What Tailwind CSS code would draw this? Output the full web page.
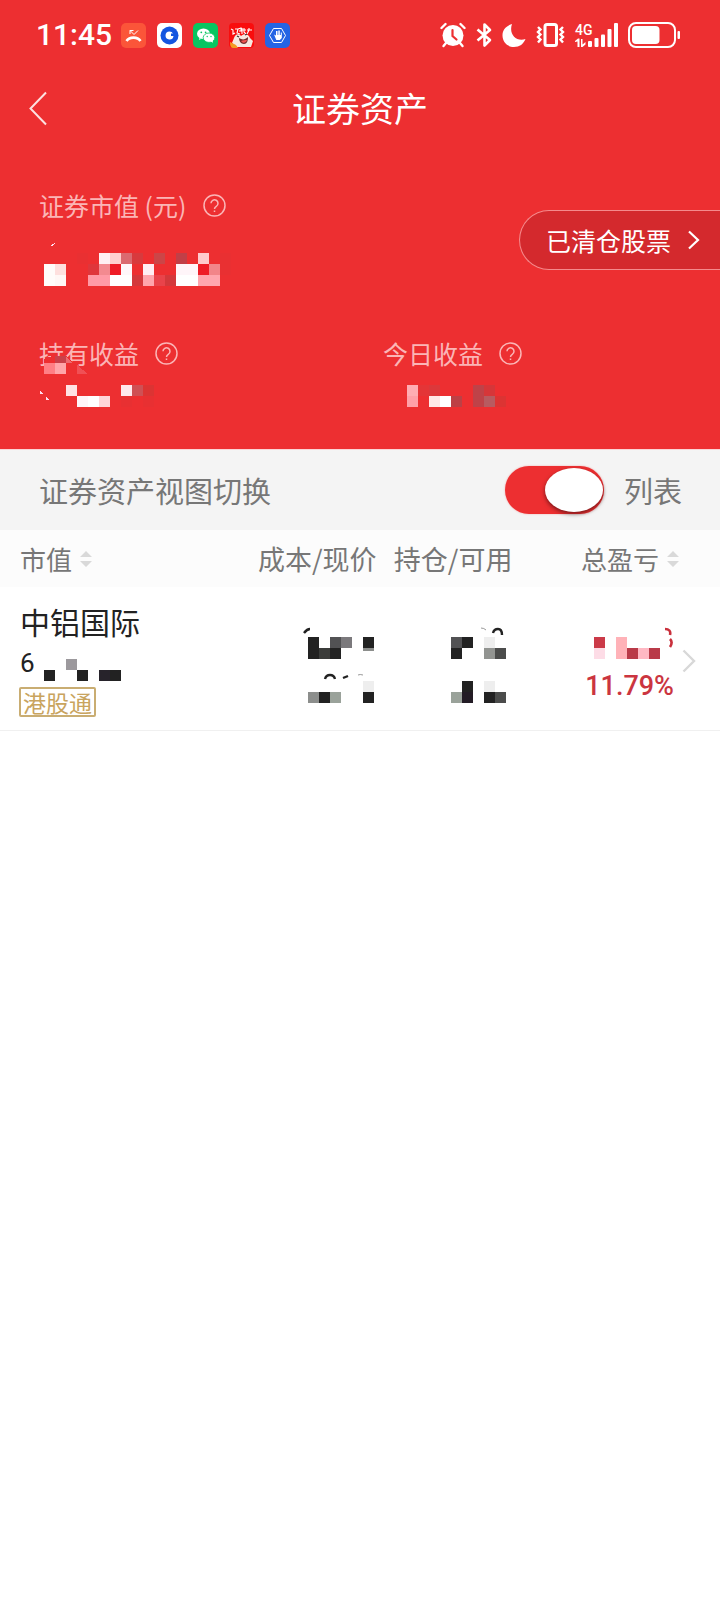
<!DOCTYPE html>
<html lang="zh-CN">
<head>
<meta charset="utf-8">
<meta name="viewport" content="width=device-width, initial-scale=1">
<title>证券资产</title>
<script src="https://cdn.jsdelivr.net/npm/@tailwindcss/browser@4"></script>
</head>
<body class="min-h-screen bg-white font-['Noto_Sans_CJK_SC',sans-serif] text-[#777]">
<div class="bg-[#ed2f31] text-white">
  <!-- Status bar -->
  <div class="flex h-[70px] items-center justify-between pr-10 pl-9">
    <div class="flex items-center gap-[11px]">
      <span class="-mr-[2px] font-['Roboto',sans-serif] text-[30px] leading-9 font-medium">11:45</span>
      <svg class="size-[25px]" viewBox="0 0 25 25"><rect width="25" height="25" rx="5" fill="#fb5539"/><path d="M5.500 18c3-4.500 11-4.500 14 0" fill="none" stroke="#fff" stroke-width="2.600"/><path d="M9 11V7.500h3.500M9 7.500l4 4 4-4" fill="none" stroke="#fff" stroke-width="1"/></svg>
      <svg class="size-[25px]" viewBox="0 0 25 25"><rect width="25" height="25" rx="5" fill="#fff"/><circle cx="12.500" cy="12.500" r="9" fill="#1455e0"/><path d="M12.500 8.500a4 4 0 1 0 4 4.500h-2.500v-2.500h2A4 4 0 0 0 12.500 8.500z" fill="#fff"/></svg>
      <svg class="size-[25px]" viewBox="0 0 25 25"><rect width="25" height="25" rx="5" fill="#08c561"/><path d="M6.400 14.900L6 17l2.300-1.200z" fill="#fff"/><ellipse cx="10.500" cy="10.800" rx="6.500" ry="5.300" fill="#fff"/><ellipse cx="16" cy="14.700" rx="5.800" ry="4.700" fill="#fff" stroke="#08c561" stroke-width=".8"/><path d="M17 18l3 1.800-.5-3z" fill="#fff"/><g fill="#08c561"><circle cx="8.300" cy="9.300" r=".9"/><circle cx="12.600" cy="9.300" r=".9"/><circle cx="14.200" cy="13.500" r=".7"/><circle cx="18" cy="13.500" r=".7"/></g></svg>
      <svg class="size-[25px]" viewBox="0 0 25 25"><rect width="25" height="25" rx="4" fill="#f90d0d"/><path d="M2 6l2 1v4l2-1M6 6h3l-1 4 3 1M9 6l3-1v3h-2M13 5v6M12 7h5M15 5v4l2 2M18 7h5M20 5v2l-2 4" fill="none" stroke="#fff" stroke-width="1.100"/><path d="M5 15c1-4 5-5 7-2 3-3 8-2 9 2l3 3-2 6H8l-5-4z" fill="#f7e8e0"/><path d="M10 15c3 2 6 2 9-1 0 4-1 7-4 7s-5-3-5-6z" fill="#742c2b"/><path d="M12 18c2-1 4-1 6-1-1 3-4 4-6 1z" fill="#f05550"/><path d="M1 19l6 3 2 3H4c-2 0-3-2-3-6z" fill="#f49a22"/><path d="M8 13l2 1M16 12l2-1" stroke="#333" stroke-width="1.200"/></svg>
      <svg class="size-[25px]" viewBox="0 0 25 25"><rect width="25" height="25" rx="5" fill="#2464e4"/><path d="M8.500 5.500h8l4 7-4 7h-8l-4-7z" fill="none" stroke="#fff" stroke-width="1"/><path d="M9 11.500l2 1V8h1.500v4h.8V7.500h1.500V12h1V9.500h1V15l-2 2h-3.500z" fill="#fff"/></svg>
    </div>
    <div class="flex items-center gap-[10px]">
      <svg class="h-[26px] w-[26px]" viewBox="0 0 26 26" fill="none" stroke="#fff" stroke-linecap="round"><circle cx="13" cy="13.500" r="10.500" fill="#fff" stroke="none"/><path d="M1.500 6l4-4M20.500 2l4 4" stroke-width="2.400"/><path d="M6 21l-2.500 3M20 21l2.500 3" stroke-width="2.400"/><path d="M12.500 8v6l4 3.500" stroke="#ed2f31" stroke-width="2.200"/></svg>
      <svg class="h-[26px] w-4" viewBox="0 0 16 26" fill="none" stroke="#fff" stroke-width="2.600" stroke-linejoin="round"><path d="M1.500 7.500L14 18l-5.500 5.500v-21L14 8 1.500 18.500"/></svg>
      <svg class="h-[26px] w-6" viewBox="0 0 24 26"><path d="M10 2C4 4 .5 8 .5 13.500.5 20 5.500 25 12 25c5.500 0 9.500-3 11.500-8C14 20 6.500 12 10 2z" fill="#fff"/></svg>
      <svg class="h-[26px] w-[29px]" viewBox="0 0 29 26" fill="none" stroke="#fff"><rect x="9" y="2.500" width="11.500" height="21" rx="2" stroke-width="3"/><path d="M2 5l2.500 2.500L2 10l2.500 2.500L2 15l2.500 2.500L2 20.500M27 5l-2.500 2.500L27 10l-2.500 2.500L27 15l-2.500 2.500L27 20.500" stroke-width="2.400"/></svg>
      <div class="relative h-[26px] w-[43px]">
        <span class="absolute top-0 left-0 font-['Roboto',sans-serif] text-[14px] leading-4 font-medium">4G</span>
        <svg class="h-[26px] w-[43px]" viewBox="0 0 43 26" fill="#fff"><path d="M0 19l3-2.500h1.500V25h-2v-5.500L0 20zM6 17h1.500v5.500L10.500 20v2.500L7.500 25H6z"/><rect x="13" y="19" width="4" height="6" rx="1"/><rect x="19.500" y="16" width="4" height="9" rx="1"/><rect x="26" y="12.500" width="4" height="12.500" rx="1"/><rect x="32.500" y="7" width="4" height="18" rx="1"/><rect x="39" y="1" width="4" height="24" rx="1"/></svg>
      </div>
      <svg class="h-[26px] w-[52px]" viewBox="0 0 52 26"><rect x="1" y="1" width="46" height="24" rx="7" fill="none" stroke="#fff" stroke-width="2"/><rect x="4" y="4" width="27.500" height="18" rx="4" fill="#fff"/><rect x="49.500" y="9" width="2.500" height="8" rx="1" fill="#fff"/></svg>
    </div>
  </div>

  <!-- Navigation -->
  <header class="grid h-[75px] grid-cols-[1fr_auto_1fr] items-center">
    <button type="button" aria-label="返回" class="ml-7 h-10 w-6"><svg class="h-10 w-6" viewBox="0 0 24 40"><path d="M18 4.500L2.500 20.500 18 36.500" fill="none" stroke="#fff" stroke-opacity=".85" stroke-width="2"/></svg></button>
    <h1 class="text-[34px] leading-[50px]">证券资产</h1>
  </header>

  <!-- Asset summary -->
  <section class="pt-[42px] pb-[38px] pl-[39px]">
    <div class="flex items-start justify-between">
      <div>
        <div class="flex h-9 items-center gap-4 text-[25px] leading-9 text-[#fbb5b6]">
          <span>证券市值 (元)</span>
          <button type="button" aria-label="证券市值说明" class="size-[23px]"><svg viewBox="0 0 23 23" fill="none" stroke="#fbb5b6" stroke-width="1.500"><circle cx="11.500" cy="11.500" r="10.500"/><path d="M8 9.300a3.500 3.500 0 1 1 5.300 3c-1.300.8-1.800 1.300-1.800 2.700M11.500 16.500v1.600"/></svg></button>
        </div>
        <svg class="mt-4 h-12 w-[200px]" viewBox="39 239 200 48" shape-rendering="crispEdges" role="img" aria-label="金额已隐藏">
          <path d="M51 246l1-2 3-1-2 3z" fill="#fde"/>
          <path d="M77 253h11v11H77zM220 253h11v11h-11zM220 264h11v11h-11z" fill="#e93032"/>
          <path d="M99 253h11v11H99z" fill="#fff0f3"/><path d="M110 253h11v11h-11z" fill="#ffd0cf"/><path d="M121 253h11v11h-11z" fill="#db6a70"/><path d="M132 253h11v11h-11z" fill="#d83a3d"/><path d="M154 253h11v11h-11z" fill="#cc4547"/><path d="M176 253h11v11h-11z" fill="#c13f47"/><path d="M198 253h11v11h-11z" fill="#ffcbcd"/>
          <path d="M44 264h11v22H44z" fill="#fffcfa"/><path d="M55 264h11v11H55z" fill="#fee0de"/><path d="M55 275h11v11H55z" fill="#fff7f5"/>
          <path d="M88 264h11v11H88z" fill="#df363b"/><path d="M99 264h11v11H99z" fill="#f38a90"/><path d="M110 264h11v11h-11zM198 264h11v11h-11z" fill="#ee1d27"/><path d="M121 264h11v11h-11z" fill="#fff7fa"/><path d="M143 264h11v11h-11z" fill="#ffeef3"/><path d="M176 264h22v11h-22z" fill="#fff5f9"/><path d="M209 264h11v11h-11z" fill="#f28589"/>
          <path d="M88 275h22v11H88z" fill="#ff9aa6"/><path d="M110 275h22v11h-22zM176 275h22v11h-22z" fill="#fff"/><path d="M132 275h11v11h-11zM165 275h11v11h-11z" fill="#d4383b"/><path d="M143 275h11v11h-11z" fill="#ffa5ac"/><path d="M154 275h11v11h-11z" fill="#e9434a"/><path d="M198 275h22v11h-22z" fill="#ffa6ae"/>
        </svg>
      </div>
      <button type="button" class="mt-[23px] flex h-[60px] items-center gap-4 rounded-l-full border border-r-0 border-[#f58a8c] bg-[#d4292d] pr-[19px] pl-[26px] text-[25px] leading-9">
        已清仓股票
        <svg class="h-6 w-[14px]" viewBox="0 0 14 24"><path d="M2 3.500l9 8.500-9 8.500" fill="none" stroke="#fff" stroke-width="2.200"/></svg>
      </button>
    </div>

    <div class="mt-12 grid grid-cols-[344fr_337fr]">
      <div>
        <div class="flex h-9 items-center gap-4 text-[25px] leading-9 text-[#fbb5b6]">
          <span>持有收益</span>
          <button type="button" aria-label="持有收益说明" class="size-[23px]"><svg viewBox="0 0 23 23" fill="none" stroke="#fbb5b6" stroke-width="1.500"><circle cx="11.500" cy="11.500" r="10.500"/><path d="M8 9.300a3.500 3.500 0 1 1 5.300 3c-1.300.8-1.800 1.300-1.800 2.700M11.500 16.500v1.600"/></svg></button>
        </div>
        <svg class="relative h-10 w-[200px] overflow-visible" viewBox="39 371 200 40" shape-rendering="crispEdges" role="img" aria-label="金额已隐藏">
          <path d="M44 359l8-3h14l8 7v11H44z" fill="#ed2f31"/><path d="M55 356h11v7H55z" fill="#c9414a"/><path d="M66 357l7 6h-7z" fill="#ee6a70"/><path d="M44 363h11v11H44z" fill="#ff7f85"/><path d="M55 363h11v11H55z" fill="#ffa5a9"/><path d="M77 365l11 9H77z" fill="#f05055"/>
          <path d="M40 391l4 3h-4zM46 396l3 4h-3z" fill="#fde"/>
          <path d="M66 385h11v11H66z" fill="#ffe2e4"/><path d="M121 385h11v11h-11z" fill="#ffe9ed"/><path d="M132 385h11v11h-11z" fill="#cf5054"/><path d="M143 385h11v11h-11z" fill="#dc3433"/>
          <path d="M77 396h11v11H77z" fill="#fff5f9"/><path d="M88 396h11v11H88z" fill="#fff"/><path d="M99 396h11v11H99z" fill="#ffd5d8"/><path d="M121 396h11v11h-11zM143 396h11v11h-11z" fill="#e83032"/>
        </svg>
      </div>
      <div>
        <div class="flex h-9 items-center gap-4 text-[25px] leading-9 text-[#fbb5b6]">
          <span>今日收益</span>
          <button type="button" aria-label="今日收益说明" class="size-[23px]"><svg viewBox="0 0 23 23" fill="none" stroke="#fbb5b6" stroke-width="1.500"><circle cx="11.500" cy="11.500" r="10.500"/><path d="M8 9.300a3.500 3.500 0 1 1 5.300 3c-1.300.8-1.800 1.300-1.800 2.700M11.500 16.500v1.600"/></svg></button>
        </div>
        <svg class="h-10 w-[200px]" viewBox="383 371 200 40" shape-rendering="crispEdges" role="img" aria-label="金额已隐藏">
          <path d="M407 385h11v11h-11z" fill="#ffadb3"/><path d="M418 385h11v11h-11z" fill="#e43537"/><path d="M429 385h11v11h-11z" fill="#dc383b"/><path d="M473 385h11v22h-11z" fill="#bf4248"/><path d="M484 385h11v11h-11z" fill="#d63639"/>
          <path d="M407 396h11v11h-11z" fill="#ffa0a8"/><path d="M429 396h11v11h-11z" fill="#ffe8e7"/><path d="M440 396h11v11h-11z" fill="#fff"/><path d="M451 396h11v11h-11z" fill="#bd4045"/><path d="M484 396h11v11h-11z" fill="#b85b60"/><path d="M495 396h11v11h-11z" fill="#dc3433"/>
        </svg>
      </div>
    </div>
  </section>
</div>

<!-- View switch -->
<div class="flex h-[81px] items-center justify-between border-t border-[#fbd5d5] bg-[#f4f4f4] pr-[38px] pl-[39px] text-[29px] leading-[44px]">
  <span class="-mt-px">证券资产视图切换</span>
  <label class="flex items-center gap-5">
    <input type="checkbox" role="switch" checked class="flex h-12 w-[99px] appearance-none items-center rounded-full bg-[#ed2f31] px-px shadow-[0_0_2px_#ed2f3166] before:h-11 before:w-[58px] before:rounded-[50%] before:bg-white before:shadow-[0_2px_4px_#00000080] before:content-[''] checked:justify-end">
    <span>列表</span>
  </label>
</div>

<!-- Holdings -->
<table class="w-full table-fixed border-collapse">
  <thead class="bg-[#fcfcfc]">
    <tr class="h-[57px]">
      <th scope="col" class="w-[33%] p-0 pl-5 text-left font-normal">
        <button type="button" class="flex items-center gap-2 text-[26px] leading-10">市值<svg class="h-[18px] w-3" viewBox="0 0 12 18" fill="#d9d9d9"><path d="M6 1l6 6H0zM6 17l6-6H0z"/></svg></button>
      </th>
      <th scope="col" class="w-[20%] p-0 pr-[5px] text-right text-[27px] leading-10 font-normal whitespace-nowrap">成本/现价</th>
      <th scope="col" class="w-[19%] p-0 pr-[6px] text-right text-[27px] leading-10 font-normal whitespace-nowrap">持仓/可用</th>
      <th scope="col" class="p-0 pr-[41px] font-normal">
        <button type="button" class="ml-auto flex items-center gap-2 text-[26px] leading-10">总盈亏<svg class="h-[18px] w-3" viewBox="0 0 12 18" fill="#d9d9d9"><path d="M6 1l6 6H0zM6 17l6-6H0z"/></svg></button>
      </th>
    </tr>
  </thead>
  <tbody>
    <tr class="h-[143px] border-b border-[#f0f0f0] align-top">
      <td class="p-0 pt-3 pl-5 text-[#222]">
        <div class="text-[30px] leading-[44px]">中铝国际</div>
        <div class="flex h-10 items-center gap-2">
          <span class="w-[15px] font-['Roboto',sans-serif] text-[26px] leading-9">6</span>
          <svg class="h-10 w-[85px]" viewBox="43 644 85 40" shape-rendering="crispEdges" role="img" aria-label="代码已隐藏"><path d="M66 660h11v11H66z" fill="#9c999d"/><path d="M44 671h11v11H44zM77 671h11v11H77zM110 671h11v11h-11z" fill="#222"/><path d="M99 671h11v11H99z" fill="#27232b"/></svg>
        </div>
        <span class="-ml-px mt-1 block h-[30px] w-fit rounded-[2px] border-2 border-[#c9ad72] px-[2px] text-[23px] leading-[26px] text-[#c9a45e]">港股通</span>
      </td>
      <td class="p-0 pt-[38px] pr-[6px]">
        <svg class="ml-auto h-20 w-[76px]" viewBox="300 626 76 80" role="img" aria-label="成本与现价已隐藏">
          <g shape-rendering="crispEdges"><path d="M308 638h11v22h-11zM330 649h11v11h-11zM363 638h11v11h-11zM319 693h11v11h-11zM363 693h11v11h-11z" fill="#222"/><path d="M330 638h11v11h-11z" fill="#525254"/><path d="M341 638h11v11h-11z" fill="#7b797c"/><path d="M319 649h11v11h-11z" fill="#3b3c3a"/><path d="M363 649h11v3h-11zM308 693h11v11h-11z" fill="#8c8e8c"/><path d="M330 693h11v11h-11z" fill="#9aa29a"/><path d="M363 682h11v11h-11z" fill="#eee"/></g>
          <path d="M304 634q3-4 6-4M325 680q1-4 5-4t5 4M343 679l5-2" fill="none" stroke="#222" stroke-width="2.400"/><path d="M358 676q2-1 5 0" fill="none" stroke="#999"/>
        </svg>
      </td>
      <td class="p-0 pt-[38px] pr-[6px]">
        <svg class="ml-auto h-20 w-[64px]" viewBox="448 626 64 80" role="img" aria-label="持仓与可用已隐藏">
          <g shape-rendering="crispEdges"><path d="M462 638h11v11h-11zM451 649h11v11h-11zM462 682h11v11h-11zM484 693h11v11h-11z" fill="#222"/><path d="M451 638h11v11h-11z" fill="#525254"/><path d="M484 638h11v11h-11zM484 682h11v11h-11z" fill="#eee"/><path d="M484 649h11v11h-11z" fill="#929491"/><path d="M495 649h11v11h-11zM495 693h11v11h-11z" fill="#4b4c4b"/><path d="M451 693h11v11h-11z" fill="#9aa29a"/><path d="M462 693h11v11h-11z" fill="#231c25"/></g>
          <path d="M493 634q1-4 5-4t4 6" fill="none" stroke="#222" stroke-width="2.400"/><path d="M481 629q3 0 5 2" fill="none" stroke="#999"/>
        </svg>
      </td>
      <td class="p-0 pt-[38px] pr-6">
        <div class="flex items-center justify-end gap-2">
          <div>
            <svg class="ml-auto h-9 w-[88px]" viewBox="586 626 88 36" role="img" aria-label="盈亏已隐藏">
              <g shape-rendering="crispEdges"><path d="M594 638h11v11h-11z" fill="#cb3a48"/><path d="M594 649h11v11h-11z" fill="#fddce6"/><path d="M616 638h11v22h-11z" fill="#ffb2b8"/><path d="M627 649h11v11h-11zM649 649h11v11h-11z" fill="#b93a48"/><path d="M638 649h11v11h-11z" fill="#ffb8c3"/></g>
              <path d="M665 630c4 0 6 2 5 6M670 640c2 2 2 5 0 8" fill="none" stroke="#c9303c" stroke-width="2.600"/>
            </svg>
            <div class="h-11 text-right font-['Roboto',sans-serif] text-[27px] leading-[50px] font-medium text-[#cb3540]">11.79%</div>
          </div>
          <a href="#" aria-label="查看中铝国际详情" class="-mt-2"><svg class="h-6 w-[14px]" viewBox="0 0 14 24"><path d="M1.500 1.500L12 12 1.500 22.500" fill="none" stroke="#d8d8d8" stroke-width="2.400"/></svg></a>
        </div>
      </td>
    </tr>
  </tbody>
</table>
</body>
</html>
